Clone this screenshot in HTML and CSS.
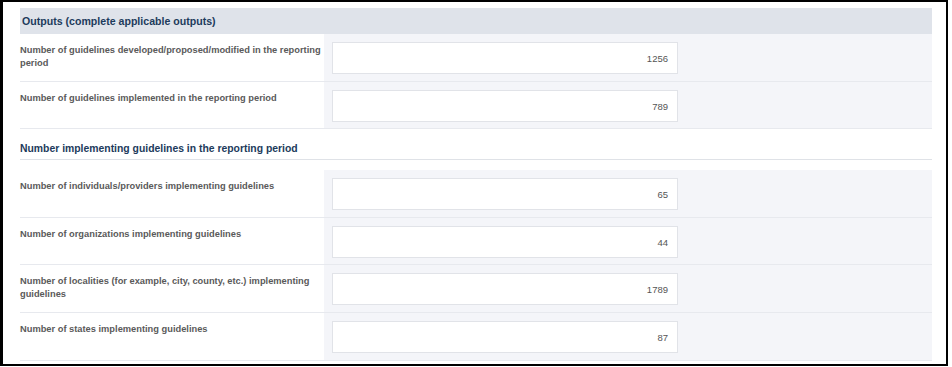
FILE: index.html
```html
<!DOCTYPE html>
<html>
<head>
<meta charset="utf-8">
<link rel="stylesheet" href="styles.css">
</head>
<body>
<div class="frame">
  <div class="content">
    <div class="panel-heading">Outputs (complete applicable outputs)</div>
    <div class="row">
      <div class="label">Number of guidelines developed/proposed/modified in the reporting period</div>
      <div class="field"><div class="input">1256</div></div>
    </div>
    <div class="row">
      <div class="label">Number of guidelines implemented in the reporting period</div>
      <div class="field"><div class="input">789</div></div>
    </div>
    <div class="section-title">Number implementing guidelines in the reporting period</div>
    <div class="row">
      <div class="label">Number of individuals/providers implementing guidelines</div>
      <div class="field"><div class="input">65</div></div>
    </div>
    <div class="row">
      <div class="label">Number of organizations implementing guidelines</div>
      <div class="field"><div class="input">44</div></div>
    </div>
    <div class="row">
      <div class="label">Number of localities (for example, city, county, etc.) implementing guidelines</div>
      <div class="field"><div class="input">1789</div></div>
    </div>
    <div class="row">
      <div class="label">Number of states implementing guidelines</div>
      <div class="field"><div class="input">87</div></div>
    </div>
  </div>
</div>
</body>
</html>
```

FILE: styles.css
```css
html, body {
  margin: 0;
  padding: 0;
  background: #fff;
}
body {
  font-family: "Liberation Sans", Arial, sans-serif;
}
.frame {
  box-sizing: border-box;
  width: 948px;
  height: 366px;
  border: 2px solid #000;
  border-left-width: 3px;
  overflow: hidden;
}
.content {
  margin-left: 17px;
  width: 912px;
  padding-top: 6px;
}
.panel-heading {
  height: 26px;
  background: #dfe3ea;
  color: #1d3b5c;
  font-weight: bold;
  font-size: 10.6px;
  line-height: 26px;
  padding-left: 2px;
}
.row {
  display: grid;
  grid-template-columns: 304px 1fr;
  height: 46.6px;
  border-bottom: 1px solid #e7e9ee;
}
.label {
  color: #5a5a5a;
  font-weight: bold;
  font-size: 9.3px;
  line-height: 13px;
  padding-top: 10px;
}
.field {
  background: #f4f5f9;
  padding: 8px 0 0 8px;
}
.input {
  box-sizing: border-box;
  width: 346px;
  height: 32px;
  background: #fff;
  border: 1px solid #e1e3e8;
  color: #555;
  font-size: 9.5px;
  line-height: 31px;
  text-align: right;
  padding-right: 9px;
}
.section-title {
  margin-top: 12px;
  color: #1d3b5c;
  font-weight: bold;
  font-size: 10.4px;
  line-height: 16px;
  padding-bottom: 2px;
  border-bottom: 1px solid #dfe2e7;
  margin-bottom: 10px;
}
```
